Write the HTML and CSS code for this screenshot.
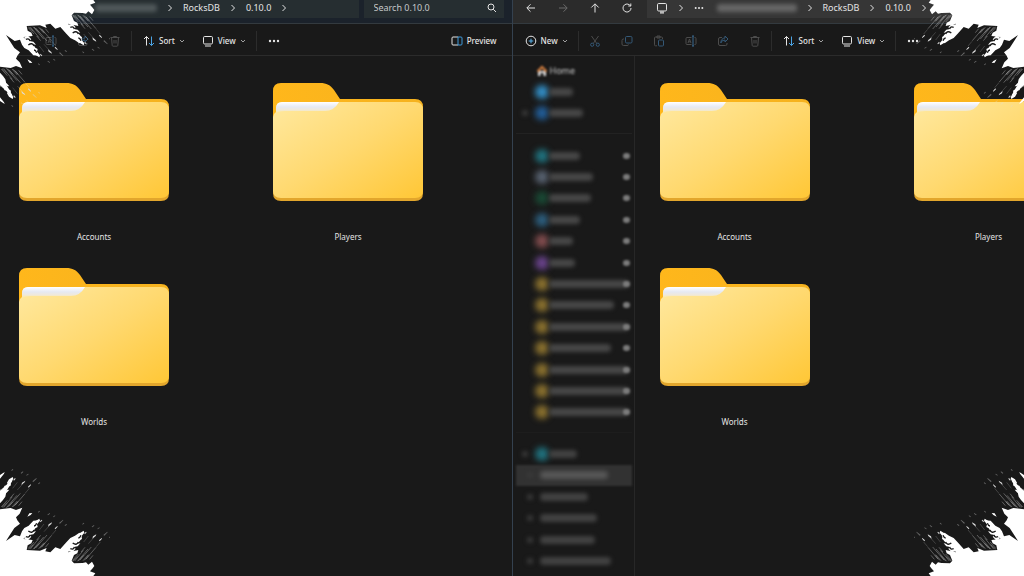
FILE: index.html
```
<!DOCTYPE html>
<html lang="en">
<head>
<meta charset="utf-8">
<title>0.10.0 - File Explorer</title>
<link rel="stylesheet" href="styles.css">
</head>
<body>
<svg class="defs" aria-hidden="true">
  <defs>
    <linearGradient id="front" x1="0" y1="0" x2="1" y2="1"><stop offset="0" stop-color="#ffe9a0"/><stop offset=".5" stop-color="#ffd970"/><stop offset="1" stop-color="#ffc736"/></linearGradient>
    <linearGradient id="back" x1="0" y1="0" x2="1" y2="0"><stop offset="0" stop-color="#ffb71b"/><stop offset="1" stop-color="#f5b21f"/></linearGradient>
    <linearGradient id="paper" x1="0" y1="0" x2="0" y2="1"><stop offset="0" stop-color="#fff"/><stop offset=".45" stop-color="#e6e9f2"/><stop offset=".7" stop-color="#efe9dc"/><stop offset="1" stop-color="#ffe9a0"/></linearGradient>
  </defs>
  <symbol id="folder" viewBox="0 0 150 118">
    <path fill="url(#back)" d="M8 0H47c7 0 10 2 14 7l6 9H142q8 0 8 8V60H0V8q0-8 8-8z"/>
    <path fill="#e2a62c" d="M0 60H150V110q0 8-8 8H8q-8 0-8-8z"/>
    <path fill="url(#front)" d="M3 26q0-7 7-7H142q8 0 8 8V108q0 7-8 7H8q-8 0-8-7V34q0-3 3-5z"/>
    <path fill="url(#paper)" d="M3 30V25q0-6 6-6H66q-5 9-14 9H12q-6 0-9 2z"/>
  </symbol>
  <symbol id="chevron" viewBox="0 0 6 8"><path d="M1.500 1 4.500 4l-3 3"/></symbol>
  <symbol id="caret" viewBox="0 0 6 6"><path d="M1 2l2 2 2-2"/></symbol>
  <symbol id="search" viewBox="0 0 12 12"><circle cx="5" cy="5" r="3"/><path d="M7.200 7.200 10 10"/></symbol>
  <symbol id="left" viewBox="0 0 12 12"><path d="M10 6H2M5.500 2.300 1.800 6l3.700 3.700"/></symbol>
  <symbol id="right" viewBox="0 0 12 12"><path d="M2 6h8M6.500 2.300 10.200 6 6.500 9.700"/></symbol>
  <symbol id="up" viewBox="0 0 12 12"><path d="M6 10.500V2M2.300 5.500 6 1.800l3.700 3.700"/></symbol>
  <symbol id="refresh" viewBox="0 0 12 12"><path d="M10 6a4 4 0 1 1-1.500-3.100L9.800 4M9.800 1.500V4H7.300"/></symbol>
  <symbol id="monitor" viewBox="0 0 12 12"><rect x="1.500" y="1.500" width="9" height="7.500" rx="1.200"/><path d="M4 11h4M5 9v2M7 9v2"/></symbol>
  <symbol id="dots" viewBox="0 0 12 12"><g fill="currentColor" stroke="none"><circle cx="2" cy="6" r="1.200"/><circle cx="6" cy="6" r="1.200"/><circle cx="10" cy="6" r="1.200"/></g></symbol>
  <symbol id="plus" viewBox="0 0 12 12"><circle cx="6" cy="6" r="4.800"/><path stroke="#5ab4ee" d="M6 3.700v4.600M3.700 6h4.600"/></symbol>
  <symbol id="cut" viewBox="0 0 12 12"><path d="M2.500 1l5.300 7.500M9.500 1 4.200 8.500"/><g stroke="#345876"><circle cx="3.200" cy="9.700" r="1.600"/><circle cx="8.800" cy="9.700" r="1.600"/></g></symbol>
  <symbol id="copy" viewBox="0 0 12 12"><rect x="4.500" y="1.500" width="6.500" height="6.500" rx="1.200" stroke="#345876"/><path d="M3 4H2.500Q1 4 1 5.500V9q0 1.500 1.500 1.500H6q1.500 0 1.500-1"/></symbol>
  <symbol id="paste" viewBox="0 0 12 12"><path d="M4 10.800H2.500q-1 0-1-1V3q0-1 1-1h6q1 0 1 1v1M4 1h3v2H4z"/><rect x="5.500" y="5" width="5" height="6" rx="1" stroke="#345876"/></symbol>
  <symbol id="rename" viewBox="0 0 12 12"><path d="M6.500 2.500H2q-1 0-1 1v5q0 1 1 1h4.500M9.500 2.500h.5q1 0 1 1v5q0 1-1 1h-.5M3 8l1.500-4L6 8M3.500 6.800h2"/><path stroke="#3a6b91" d="M8 1v10M7 1h2M7 11h2"/></symbol>
  <symbol id="share" viewBox="0 0 12 12"><path d="M5 2.500H3Q1.500 2.500 1.500 4v5q0 1.500 1.500 1.500h5.500q1.500 0 1.500-1.500V8"/><path stroke="#345876" d="M3.800 8Q4.500 5 8 5v2l3-3-3-3v2Q4 3.200 3.800 8z"/></symbol>
  <symbol id="trash" viewBox="0 0 12 12"><path d="M1.500 2.500h9M4.500 2.500v-1h3v1M2.500 2.500l.7 8q.1.700.8.700h4q.700 0 .800-.700l.7-8M5 5v3.500M7 5v3.500"/></symbol>
  <symbol id="sort" viewBox="0 0 12 12"><path d="M3.500 10.500v-9M1 4l2.500-2.500L6 4"/><path stroke="#4ba3e3" d="M8.500 1.500v9M6 8l2.500 2.500L11 8"/></symbol>
  <symbol id="view" viewBox="0 0 12 12"><rect x="1.500" y="1.500" width="9" height="7.500" rx="1.200"/><path d="M3 11h6"/></symbol>
  <symbol id="preview" viewBox="0 0 12 12"><path d="M7 2H2Q1 2 1 3v6q0 1 1 1h5"/><path stroke="#3e9bdc" d="M7 2h3q1 0 1 1v6q0 1-1 1H7z"/></symbol>
  <symbol id="home" viewBox="0 0 12 12"><path fill="#ddd" stroke="none" d="M2 6h8v5H7.500V8h-3v3H2z"/><path stroke="#d98240" stroke-width="2" d="M1.500 6.500 6 2l4.500 4.500"/></symbol>
  <symbol id="tuft" viewBox="0 0 130 130" overflow="visible">
    <g fill="none" stroke="#fff">
      <path opacity=".6" stroke-width="1.500" d="M2 4l18 20M9 3l26 32M17 2l32 37M25 6l34 39M34 4l16 18M43 9l30 35M54 8l10 12"/>
      <path opacity=".3" stroke-width="3" d="M4 3l14 13M20 3l16 17M38 5l14 15M28 30l12 14"/>
      <path opacity=".35" stroke-width="1.500" d="M50 55l16 18M74 46l12 14M36 60l14 18"/>
    </g>
    <path fill="#fff" d="M-10 32L2 29 12 40 6 45 18 47 26 56 17 55 24 65 31 69 29 77 38 88 36 94 25 87 19 77 22 70 12 68 8 61 -1 56 0 49z"/>
    <path fill="none" stroke="#191919" stroke-width="4" d="M-4 40q10-4 12 5M3 57q12-9 17 3M20 72q5 0 8 8"/>
    <g fill="#ddd"><path d="M62 70l10 8 2 5-10-6zM84 62l7 8-1 2-8-7zM40 83l5 6-2 2-5-5z"/><path opacity=".4" d="M98 79l10 10-1 2-12-10zM62 104l6 5-1 2-7-5zM113 72l6 4-2 2-5-4zM33 112l5 4-2 2-4-4zM78 98l6 4-1 2-6-4z"/></g>
  </symbol>
  <symbol id="splash" viewBox="0 0 330 330">
    <path fill="#fff" d="M0 0H280L286 8 270 14 278 23 283 30 276 43 265 34 258 41 248 39 222 38 215 46 222 63 232 68 235 78 204 71 214 84 224 88 226 96 240 105 247 124 238 130 225 121 211 114 199 101 181 81 166 86 151 71 136 74 140 84 120 76 80 78 83 92 94 98 98 108 70 111 83 123 91 125 97 142 108 150 117 167 100 166 86 151 73 144 66 134 60 119 44 123 18 105 28 121 43 144 60 157 52 167 48 176 59 187 67 205 48 198 32 204 0 200z"/>
    <use href="#tuft" x="215" y="42" width="130" height="130"/>
    <use href="#tuft" x="82" y="78" width="130" height="130"/>
    <use href="#tuft" x="2" y="203" width="130" height="130"/>
    <path fill="#fff" d="M0 218l9 10 7 10 4 18 18 31-9-2-15-18-14-12zM0 292l12 15 2 5-14-9zM82 178l10 5 5 6-9-1z"/>
  </symbol>
</svg>

<div class="desktop">
  <section class="window window-a" aria-label="Left window">
    <header class="nav">
      <div class="address">
        <span class="redacted-name"></span>
        <svg class="chev"><use href="#chevron"/></svg><a href="#">RocksDB</a>
        <svg class="chev"><use href="#chevron"/></svg><a href="#">0.10.0</a>
        <svg class="chev"><use href="#chevron"/></svg>
      </div>
      <label class="search"><input type="text" placeholder="Search 0.10.0" aria-label="Search 0.10.0"><svg class="icon"><use href="#search"/></svg></label>
    </header>
    <div class="toolbar">
      <button class="tool" aria-label="Rename"><svg class="icon"><use href="#rename"/></svg></button>
      <button class="tool" aria-label="Share"><svg class="icon"><use href="#share"/></svg></button>
      <button class="tool" aria-label="Delete"><svg class="icon"><use href="#trash"/></svg></button>
      <span class="sep"></span>
      <button class="menu"><svg class="icon"><use href="#sort"/></svg>Sort<svg class="caret"><use href="#caret"/></svg></button>
      <button class="menu"><svg class="icon"><use href="#view"/></svg>View<svg class="caret"><use href="#caret"/></svg></button>
      <span class="sep"></span>
      <button class="menu" aria-label="See more"><svg class="icon"><use href="#dots"/></svg></button>
      <button class="menu preview"><svg class="icon"><use href="#preview"/></svg>Preview</button>
    </div>
    <div class="body">
      <main class="files">
        <a class="file" href="#"><svg><use href="#folder"/></svg>Accounts</a>
        <a class="file" href="#"><svg><use href="#folder"/></svg>Players</a>
        <a class="file" href="#"><svg><use href="#folder"/></svg>Worlds</a>
      </main>
    </div>
  </section>

  <section class="window window-b" aria-label="Right window">
    <header class="nav">
      <div class="history">
        <button class="tool" aria-label="Back"><svg class="icon"><use href="#left"/></svg></button>
        <button class="tool dim" aria-label="Forward"><svg class="icon"><use href="#right"/></svg></button>
        <button class="tool" aria-label="Up"><svg class="icon"><use href="#up"/></svg></button>
        <button class="tool" aria-label="Refresh"><svg class="icon"><use href="#refresh"/></svg></button>
      </div>
      <div class="address">
        <svg class="icon"><use href="#monitor"/></svg>
        <svg class="chev"><use href="#chevron"/></svg>
        <svg class="icon more"><use href="#dots"/></svg>
        <span class="redacted-name"></span>
        <svg class="chev"><use href="#chevron"/></svg><a href="#">RocksDB</a>
        <svg class="chev"><use href="#chevron"/></svg><a href="#">0.10.0</a>
        <svg class="chev"><use href="#chevron"/></svg>
      </div>
    </header>
    <div class="toolbar">
      <button class="menu"><svg class="icon"><use href="#plus"/></svg>New<svg class="caret"><use href="#caret"/></svg></button>
      <span class="sep"></span>
      <button class="tool" aria-label="Cut"><svg class="icon"><use href="#cut"/></svg></button>
      <button class="tool" aria-label="Copy"><svg class="icon"><use href="#copy"/></svg></button>
      <button class="tool" aria-label="Paste"><svg class="icon"><use href="#paste"/></svg></button>
      <button class="tool" aria-label="Rename"><svg class="icon"><use href="#rename"/></svg></button>
      <button class="tool" aria-label="Share"><svg class="icon"><use href="#share"/></svg></button>
      <button class="tool" aria-label="Delete"><svg class="icon"><use href="#trash"/></svg></button>
      <span class="sep"></span>
      <button class="menu"><svg class="icon"><use href="#sort"/></svg>Sort<svg class="caret"><use href="#caret"/></svg></button>
      <button class="menu"><svg class="icon"><use href="#view"/></svg>View<svg class="caret"><use href="#caret"/></svg></button>
      <span class="sep"></span>
      <button class="menu" aria-label="See more"><svg class="icon"><use href="#dots"/></svg></button>
    </div>
    <div class="body">
      <nav class="sidebar" aria-label="Folders">
        <ul class="places">
          <li><svg class="icon home"><use href="#home"/></svg><span class="home-name">Home</span></li>
          <li><i class="dot sky"></i><b style="width:24px"></b></li>
          <li><i class="twist"></i><i class="dot blue"></i><b style="width:34px"></b></li>
        </ul>
        <ul class="pinned">
          <li><i class="dot teal"></i><b style="width:31px"></b><i class="pin"></i></li>
          <li><i class="dot slate"></i><b style="width:44px"></b><i class="pin"></i></li>
          <li><i class="dot green"></i><b style="width:42px"></b><i class="pin"></i></li>
          <li><i class="dot steel"></i><b style="width:31px"></b><i class="pin"></i></li>
          <li><i class="dot red"></i><b style="width:24px"></b><i class="pin"></i></li>
          <li><i class="dot violet"></i><b style="width:26px"></b><i class="pin"></i></li>
          <li><i class="dot gold"></i><b style="width:80px"></b><i class="pin"></i></li>
          <li><i class="dot gold"></i><b style="width:65px"></b><i class="pin"></i></li>
          <li><i class="dot gold"></i><b style="width:80px"></b><i class="pin"></i></li>
          <li><i class="dot gold"></i><b style="width:62px"></b><i class="pin"></i></li>
          <li><i class="dot gold"></i><b style="width:80px"></b><i class="pin"></i></li>
          <li><i class="dot gold"></i><b style="width:80px"></b><i class="pin"></i></li>
          <li><i class="dot gold"></i><b style="width:80px"></b><i class="pin"></i></li>
        </ul>
        <ul class="drives">
          <li><i class="twist"></i><i class="dot teal"></i><b style="width:28px"></b></li>
          <li class="child selected"><i class="twist"></i><b style="width:68px"></b></li>
          <li class="child"><i class="twist"></i><b style="width:48px"></b></li>
          <li class="child"><i class="twist"></i><b style="width:57px"></b></li>
          <li class="child"><i class="twist"></i><b style="width:55px"></b></li>
          <li class="child"><i class="twist"></i><b style="width:71px"></b></li>
        </ul>
      </nav>
      <main class="files">
        <a class="file" href="#"><svg><use href="#folder"/></svg>Accounts</a>
        <a class="file" href="#"><svg><use href="#folder"/></svg>Players</a>
        <a class="file" href="#"><svg><use href="#folder"/></svg>Worlds</a>
      </main>
    </div>
  </section>
  <svg class="splash top-left"><use href="#splash"/></svg>
  <svg class="splash top-right"><use href="#splash"/></svg>
  <svg class="splash bottom-left"><use href="#splash"/></svg>
  <svg class="splash bottom-right"><use href="#splash"/></svg>
</div>
</body>
</html>
```
FILE: styles.css
```
* { box-sizing: border-box; }
body {
  margin: 0;
  background: #191919;
  color: #e4e4e4;
  font: 8px/12px "Noto Sans", "Open Sans", sans-serif;
}
.defs { position: absolute; width: 0; height: 0; }
.desktop {
  position: relative;
  display: flex;
  height: 100vh;
  overflow: hidden;
}
a { color: inherit; text-decoration: none; }
button {
  font: inherit;
  font-weight: 500;
  color: inherit;
  background: none;
  border: 0;
  padding: 0;
}
.icon, .chev, .caret {
  flex: none;
  fill: none;
  stroke: currentColor;
}
.icon { width: 12px; height: 12px; }
.chev { width: 6px; height: 8px; margin: 0 10px; }
.caret { width: 6px; height: 6px; }

.window {
  flex: 1 1 0;
  min-width: 0;
  display: flex;
  flex-direction: column;
}
.window-b { border-left: 1px solid #34414f; }

.nav {
  display: flex;
  gap: 5px;
  height: 24px;
  padding-bottom: 5px;
  border-bottom: 1px solid #333a3f;
  background: #2b2b2b;
  font-size: 9px;
}
.window-a .nav { background: #1b222b; padding-right: 8px; }
.address, .search, .history {
  display: flex;
  align-items: center;
  padding-bottom: 3px;
}
.address { flex: 1; min-width: 0; background: #363636; white-space: nowrap; }
.window-a .address { background: #262e31; padding-left: 95px; }
.window-b .address { padding-left: 9px; }
.window-b .nav { gap: 4px; }
.more { width: 10px; }
.redacted-name {
  width: 62px;
  height: 8px;
  border-radius: 3px;
  background: #50585a;
  filter: blur(2px);
}
.window-b .redacted-name { width: 80px; margin-left: 13px; background: #666; }
.search { width: 140px; padding-left: 10px; padding-right: 6px; background: #262e31; }
.search input {
  flex: 1;
  min-width: 0;
  padding: 0;
  border: 0;
  background: none;
  color: #ccc;
  font: inherit;
}
.search input::placeholder { color: #c5c8c9; opacity: 1; }

.tool {
  width: 32px;
  height: 16px;
  display: flex;
  align-items: center;
  justify-content: center;
}
.history { padding-left: 2px; }
.dim { color: #6b6b6b; }

.toolbar {
  display: flex;
  align-items: center;
  height: 32px;
  padding-top: 2px;
  border-bottom: 1px solid #2b2b2b;
}
.window-a .toolbar { padding-left: 35px; padding-right: 15px; }
.window-b .toolbar { padding-left: 12px; }
.toolbar .tool { color: #4c4c4c; }
.menu { display: flex; align-items: center; gap: 4px; white-space: nowrap; }
.menu .caret { color: #a0a0a0; }
.menu + .menu { margin-left: 17px; }
.menu.preview { margin-left: auto; }
.sep { width: 1px; height: 20px; background: #2c2c2c; }
.menu + .sep { margin-left: 10px; }
.sep + .menu { margin-left: 11px; }
.sep + .tool { margin-left: 0; }

.body { flex: 1; display: flex; min-height: 0; }
.files {
  flex: 1;
  min-width: 0;
  display: grid;
  grid-template-columns: 150px 150px;
  grid-auto-rows: 160px;
  gap: 25px 104px;
  align-content: start;
  padding: 27px 19px;
  overflow: hidden;
}
.window-b .files { padding-left: 25px; }
.file {
  display: flex;
  flex-direction: column;
  gap: 30px;
  text-align: center;
}
.file svg { width: 150px; height: 118px; }

.sidebar {
  flex: none;
  width: 122px;
  padding: 4px 2px 0 3px;
  border-right: 1px solid #272727;
  overflow: hidden;
}
.sidebar ul { list-style: none; margin: 0; padding: 0; display: grid; grid-auto-rows: 1fr; }
.sidebar li { display: flex; align-items: center; padding-left: 19px; position: relative; }
.sidebar .places { height: 64px; }
.sidebar .pinned { height: 290px; margin-top: 9px; padding-top: 11px; border-top: 1px solid #222; }
.sidebar .drives { height: 140px; margin-top: 9px; padding-top: 10px; border-top: 1px solid #1d1d1d; }
.sidebar b {
  height: 8px;
  border-radius: 4px;
  background: #474747;
  filter: blur(2px);
}
.sidebar .drives b { background: #424242; }
.sidebar .drives .selected b { background: #585858; }
.dot {
  flex: none;
  width: 14px;
  height: 14px;
  border-radius: 50%;
  filter: blur(3px);
}
.home { margin-left: 1px; filter: blur(1px); }
.home-name { margin-left: 2px; font-size: 9px; color: #ccc; filter: blur(1px); }
.sky { background: #328dc4; }
.blue { background: #225d97; }
.teal { background: #20717d; }
.slate { background: #57616f; }
.green { background: #194834; }
.steel { background: #2c5d7c; }
.red { background: #814c4e; }
.violet { background: #684289; }
.gold { background: #89702e; }
.pin {
  position: absolute;
  right: 2px;
  width: 7px;
  height: 6px;
  border-radius: 3px;
  background: #7c7c7c;
  filter: blur(1px);
}
.twist {
  width: 6px;
  height: 6px;
  border-radius: 3px;
  background: #3b3b3b;
  filter: blur(2px);
}
.sidebar li:has(.twist) { padding-left: 6px; }
.twist + .dot { margin-left: 7px; }
.sidebar .child:has(.twist) { padding-left: 11px; }
.child b { margin-left: 7px; }
.selected { background: #323232; filter: blur(1px); }

.splash { position: absolute; width: 110px; height: 110px; }
.top-left { top: 0; left: 0; }
.top-right { top: 0; right: 0; transform: scaleX(-1); }
.bottom-left { bottom: 0; left: 0; transform: scaleY(-1); }
.bottom-right { bottom: 0; right: 0; transform: scale(-1); }
```
